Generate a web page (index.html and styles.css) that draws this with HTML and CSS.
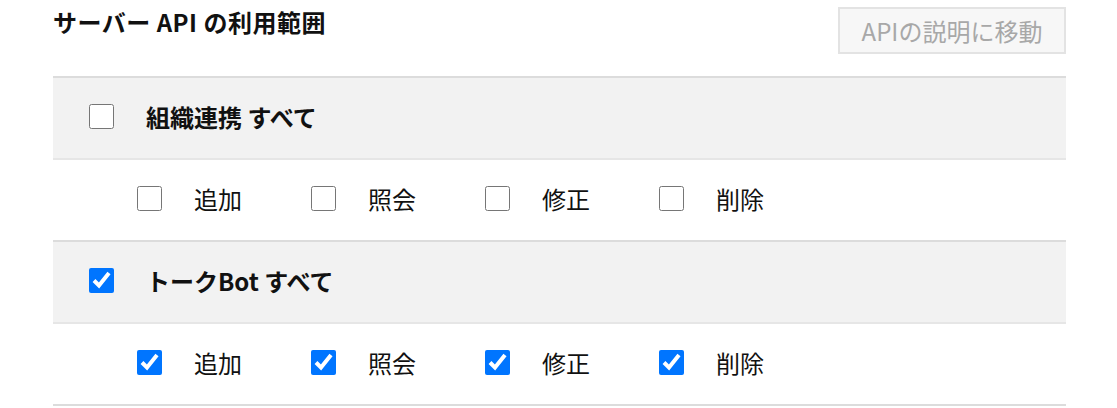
FILE: index.html
```html
<!DOCTYPE html>
<html lang="ja">
<head>
<meta charset="utf-8">
<link rel="stylesheet" href="styles.css">
</head>
<body>
<div class="page">
  <div class="top">
    <h2 class="title">サーバー API の利用範囲</h2>
    <button class="doc-btn" type="button">APIの説明に移動</button>
  </div>
  <div class="scope">
    <div class="group">
      <label class="group-head"><input type="checkbox" class="cb"><span class="group-name">組織連携 すべて</span></label>
      <div class="items">
        <label class="item"><input type="checkbox" class="cb"><span>追加</span></label>
        <label class="item"><input type="checkbox" class="cb"><span>照会</span></label>
        <label class="item"><input type="checkbox" class="cb"><span>修正</span></label>
        <label class="item"><input type="checkbox" class="cb"><span>削除</span></label>
      </div>
    </div>
    <div class="group">
      <label class="group-head"><input type="checkbox" class="cb" checked><span class="group-name">トークBot すべて</span></label>
      <div class="items">
        <label class="item"><input type="checkbox" class="cb" checked><span>追加</span></label>
        <label class="item"><input type="checkbox" class="cb" checked><span>照会</span></label>
        <label class="item"><input type="checkbox" class="cb" checked><span>修正</span></label>
        <label class="item"><input type="checkbox" class="cb" checked><span>削除</span></label>
      </div>
    </div>
  </div>
</div>
</body>
</html>
```
FILE: styles.css
```css
html, body {
  margin: 0;
  padding: 0;
  background: #fff;
}
body {
  font-family: "Noto Sans CJK JP", "Noto Sans", sans-serif;
  color: #111;
}
.page {
  width: 1013px;
  margin-left: 53px;
}
.top {
  display: flex;
  justify-content: space-between;
  align-items: flex-start;
  height: 76px;
}
.title {
  margin: 5px 0 0;
  font-size: 24px;
  font-weight: 700;
  line-height: 34px;
  letter-spacing: 0.5px;
  color: #111;
}
.doc-btn {
  margin-top: 7px;
  width: 228px;
  height: 47px;
  border: 2px solid #e3e3e3;
  background: #f7f7f7;
  color: #a8a8a8;
  font-family: inherit;
  font-size: 24px;
  padding: 0;
}
.scope {
  border-bottom: 2px solid #dcdcdc;
}
.group {
  border-top: 2px solid #dcdcdc;
}
.group-head {
  display: flex;
  align-items: center;
  height: 76px;
  padding: 0 0 4px 36px;
  background: #f2f2f2;
  border-bottom: 2px solid #e6e6e6;
}
.group-name {
  margin-left: 32px;
  font-size: 24px;
  font-weight: 700;
}
.items {
  display: flex;
  align-items: center;
  height: 76px;
  padding: 0 0 4px 84px;
}
.item {
  display: flex;
  align-items: center;
  width: 174px;
  font-size: 24px;
}
.item span {
  margin-left: 32px;
}
.cb {
  width: 25px;
  height: 25px;
  margin: 0;
  flex: none;
  accent-color: #0075ff;
}
```
